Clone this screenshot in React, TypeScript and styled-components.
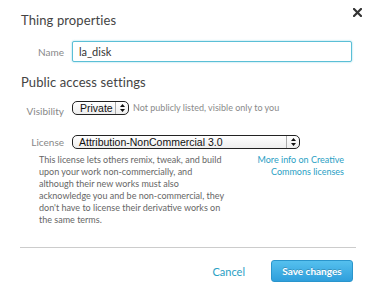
import styled, { createGlobalStyle } from 'styled-components';

const Global = createGlobalStyle`
  body {
    margin: 0;
    background: #fff;
    font-family: Lato, "Open Sans", sans-serif;
  }
`

const App = () => {
  return (
    <Dialog>
      <Global />
      <Close aria-label="close">
        <svg width="9" height="9" viewBox="0 0 9 9">
          <path d="M1 1 L8 8 M8 1 L1 8" stroke="#333" strokeWidth="2.2" strokeLinecap="square" />
        </svg>
      </Close>
      <Heading>Thing properties</Heading>
      <Row style={{ marginTop: 13 }}>
        <Label>Name</Label>
        <TextInput defaultValue="la_disk" />
      </Row>
      <Heading style={{ marginTop: 12 }}>Public access settings</Heading>
      <Row style={{ marginTop: 11 }} $align="flex-end">
        <Label $drop={2}>Visibility</Label>
        <Select $width={57}>
          <SelectText $pad={7}>Private</SelectText>
          <Arrows />
        </Select>
        <Hint>Not publicly listed, visible only to you</Hint>
      </Row>
      <Row style={{ marginTop: 20 }}>
        <Label>License</Label>
        <Select $width={228}>
          <SelectText>Attribution-NonCommercial 3.0</SelectText>
          <Arrows />
        </Select>
      </Row>
      <Info>
        <Description>
          This license lets others remix, tweak, and build<br />
          upon your work non-commercially, and<br />
          although their new works must also<br />
          acknowledge you and be non-commercial, they<br />
          don't have to license their derivative works on<br />
          the same terms.
        </Description>
        <MoreLink href="#">More info on Creative<br />Commons licenses</MoreLink>
      </Info>
      <Divider />
      <Footer>
        <Cancel href="#">Cancel</Cancel>
        <Save>Save changes</Save>
      </Footer>
    </Dialog>
  )
}

const Arrows = () => (
  <ArrowBox>
    <svg width="5" height="8" viewBox="0 0 5 8">
      <path d="M2.5 0 L5 3 L0 3 Z M2.5 8 L5 5 L0 5 Z" fill="#111" />
    </svg>
  </ArrowBox>
)

export default App;

const Dialog = styled.div`
width: 373px;
height: 297px;
position: relative;
box-sizing: border-box;
padding: 12px 20px 0 21px;
color: #555;
`
const Close = styled.button`
position: absolute;
top: 8px;
right: 11px;
border: none;
background: none;
padding: 0;
display: flex;
`
const Heading = styled.h2`
margin: 0;
font-size: 13px;
line-height: 16px;
font-weight: 400;
color: #444;
letter-spacing: 0.1px;
`
const Row = styled.div<{ $align?: string }>`
display: flex;
align-items: ${p => p.$align || 'center'};
gap: 8px;
`
const Label = styled.label<{ $drop?: number }>`
width: 43px;
text-align: right;
font-size: 10px;
color: #888;
position: relative;
top: ${p => p.$drop || 0}px;
`
const TextInput = styled.input`
width: 280px;
height: 21px;
box-sizing: border-box;
border: 1px solid #5bbfd6;
border-radius: 2px;
box-shadow: 0 0 2px rgba(80, 190, 215, 0.7);
padding: 0 6px;
font-family: Lato, sans-serif;
font-size: 11px;
color: #333;
outline: none;
`
const Select = styled.div<{ $width: number }>`
width: ${p => p.$width}px;
height: 14px;
box-sizing: border-box;
border: 1px solid #222;
border-radius: 5px;
background: linear-gradient(#fff, #eee);
display: flex;
align-items: center;
font-family: "Liberation Sans", Arial, sans-serif;
`
const SelectText = styled.span<{ $pad?: number }>`
flex: 1;
padding-left: ${p => p.$pad || 6}px;
font-size: 10.5px;
color: #111;
white-space: nowrap;
`
const ArrowBox = styled.span`
width: 12px;
height: 100%;
border-left: 1px solid #aaa;
display: flex;
align-items: center;
justify-content: center;
`
const Hint = styled.span`
margin-left: -4px;
font-size: 9px;
color: #8a8a8a;
line-height: 14px;
`
const Info = styled.div`
display: flex;
justify-content: space-between;
padding-left: 18px;
margin-top: 5px;
`
const Description = styled.p`
margin: 0;
font-size: 9px;
line-height: 12px;
color: #666;
white-space: nowrap;
`
const MoreLink = styled.a`
text-align: right;
font-size: 9px;
line-height: 12px;
color: #2aa0c4;
text-decoration: none;
margin-right: 9px;
`
const Divider = styled.hr`
margin: 21px -3px 0 -1px;
border: none;
border-top: 1px solid #ccc;
`
const Footer = styled.div`
display: flex;
justify-content: flex-end;
align-items: center;
gap: 26px;
margin-top: 12px;
`
const Cancel = styled.a`
font-size: 11px;
color: #2aa0c4;
text-decoration: none;
`
const Save = styled.button`
width: 82px;
height: 22px;
border: 1px solid #2a95cc;
border-radius: 3px;
background: linear-gradient(#55c0ee, #2f9fdc);
color: #fff;
font-family: Lato, sans-serif;
font-weight: 700;
font-size: 10px;
padding: 0;
text-shadow: 0 -1px 0 rgba(0,0,0,0.2);
`
